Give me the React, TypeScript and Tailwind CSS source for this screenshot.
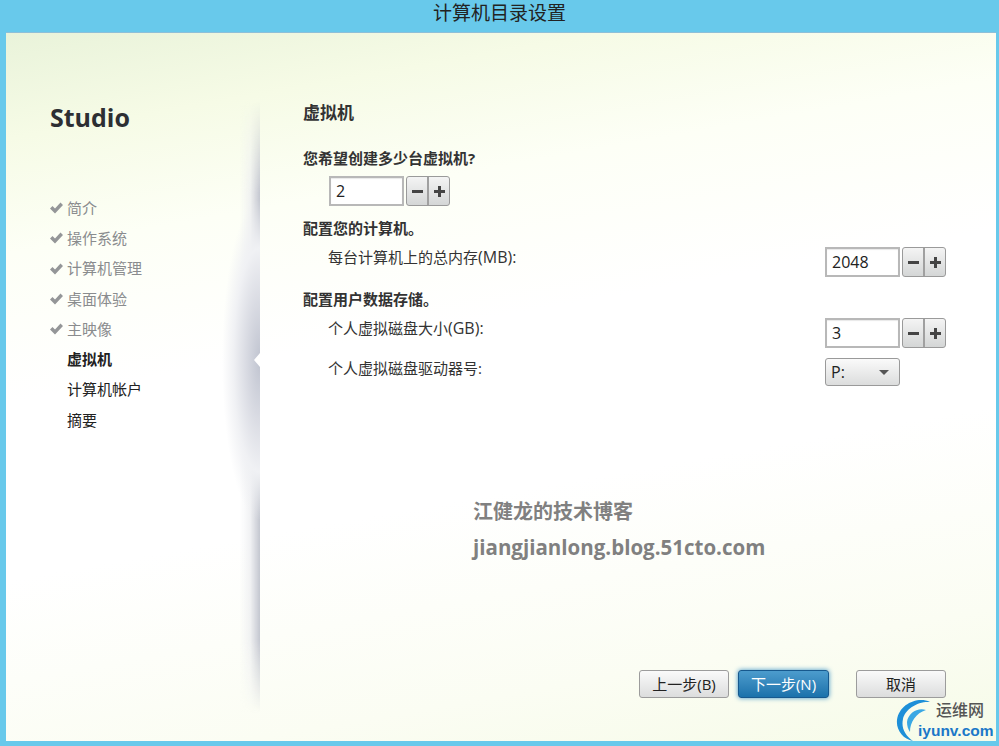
import React from 'react';

const font = { cjk: 'font-["Open_Sans","Noto_Sans_CJK_SC",sans-serif]' };

const navItems = [
  { label: '简介', done: true },
  { label: '操作系统', done: true },
  { label: '计算机管理', done: true },
  { label: '桌面体验', done: true },
  { label: '主映像', done: true },
  { label: '虚拟机', current: true },
  { label: '计算机帐户' },
  { label: '摘要' },
];

const Check = () => (
  <svg width="13" height="12" viewBox="0 0 13 12" className="shrink-0">
    <path d="M0 6.5 L2.5 4 L5 6.5 L10.5 0.5 L13 3 L5 11.5 Z" fill="#949698" />
  </svg>
);

const Stepper = ({ value }: { value: string }) => (
  <div className="flex items-center gap-[2px]">
    <div className="w-[75px] h-[30px] border-2 border-[#b8b8b8] bg-white pl-[5px] text-[16px] leading-[26px] text-[#222] shadow-[inset_0_1px_1px_#e8e8e8]">
      {value}
    </div>
    <div className="w-[44px] h-[30px] flex rounded-[3px] border border-[#9a9a9a] bg-gradient-to-b from-[#f4f4f4] to-[#d4d6d6]">
      <div className="flex-1 flex items-center justify-center border-r-2 border-[#a0a0a0]">
        <div className="w-[11px] h-[3px] bg-[#444]" />
      </div>
      <div className="flex-1 flex items-center justify-center">
        <svg width="11" height="11" viewBox="0 0 11 11">
          <path d="M4 0 H7 V4 H11 V7 H7 V11 H4 V7 H0 V4 H4 Z" fill="#444" />
        </svg>
      </div>
    </div>
  </div>
);

const Button = ({ children, primary, className }: { children: React.ReactNode; primary?: boolean; className?: string }) => (
  <div
    className={
      'h-[28px] flex items-center justify-center rounded-[3px] text-[15px] ' +
      (primary
        ? 'text-white border border-[#17598e] bg-gradient-to-b from-[#4c9ccd] to-[#1a72ab] shadow-[0_0_5px_#3f93c6] '
        : 'text-[#222] border border-[#9c9c9c] bg-gradient-to-b from-[#fafafa] to-[#dcdddd] ') +
      (className ?? '')
    }
  >
    {children}
  </div>
);

export default function App() {
  return (
    <div className={`w-[999px] h-[746px] flex flex-col bg-[#68c9eb] overflow-hidden relative ${font.cjk}`}>
      {/* Title bar */}
      <div className="h-[32px] shrink-0 flex items-center justify-center text-[19px] text-[#222] leading-none pb-[6px]">
        计算机目录设置
      </div>

      {/* Window body */}
      <div className="flex-1 ml-[6px] mr-[3px] mb-[5px] flex border-t border-[#8ebfd8] bg-[linear-gradient(170deg,#e9f3da_0%,#f6fbe6_12%,#fdfff6_25%,#ffffff_42%,#ffffff_62%,#fbfdf3_85%,#f6fbe8_100%)]">
        {/* Sidebar */}
        <aside className="w-[254px] shrink-0 relative pl-[44px] pt-[66px]">
          {/* Edge shadow: long strip plus the bulge behind the pointer */}
          <div className="absolute right-0 top-[68px] bottom-[28px] w-[20px] bg-gradient-to-r from-transparent via-[#ecedf0]/70 to-[#c4c7d0] [mask-image:linear-gradient(to_bottom,transparent,black_15%,black_88%,transparent)]" />
          <div className="absolute right-0 top-[167px] h-[320px] w-[38px] bg-[radial-gradient(ellipse_38px_160px_at_100%_50%,#c0c4d0_0%,#d8dae2_35%,#f0f1f4_70%,transparent_100%)]" />
          <div className="absolute right-0 top-[320px] w-0 h-0 border-y-[7px] border-y-transparent border-r-[6px] border-r-white" />
          <h1 className="text-[25px] leading-[36px] font-bold text-[#2d2f33] relative">Studio</h1>
          <nav className="mt-[58px] flex flex-col relative">
            {navItems.map((item) => (
              <div key={item.label} className="h-[30.25px] flex items-center">
                <div className="w-[17px] flex">{item.done && <Check />}</div>
                <span className={'text-[15px] ' + (item.current ? 'font-bold text-[#222]' : item.done ? 'text-[#8a8c8e]' : 'text-[#222]')}>
                  {item.label}
                </span>
              </div>
            ))}
          </nav>
        </aside>

        {/* Main panel */}
        <main className="flex-1 flex flex-col pl-[43px] pr-[50px] pt-[67px] pb-[43px] text-[15px] text-[#333]">
          <h2 className="text-[17px] leading-[26px] font-bold text-[#333]">虚拟机</h2>
          <p className="mt-[20px] leading-[24px] font-bold">您希望创建多少台虚拟机?</p>
          <div className="ml-[26px] mt-[6px]">
            <Stepper value="2" />
          </div>
          <p className="mt-[10px] leading-[24px] font-bold">配置您的计算机。</p>
          <div className="mt-[7px] pl-[25px] flex justify-between">
            <span className="leading-[20px]">每台计算机上的总内存<span className="text-[16px]">(MB):</span></span>
            <Stepper value="2048" />
          </div>
          <p className="mt-[10px] leading-[24px] font-bold">配置用户数据存储。</p>
          <div className="mt-[7px] pl-[25px] flex justify-between">
            <span className="leading-[20px]">个人虚拟磁盘大小<span className="text-[16px]">(GB):</span></span>
            <Stepper value="3" />
          </div>
          <div className="mt-[10px] pl-[25px] flex justify-between">
            <span className="leading-[20px]">个人虚拟磁盘驱动器号:</span>
            <div className="w-[75px] h-[28px] mr-[46px] flex items-center justify-between pl-[5px] pr-[10px] rounded-[3px] border border-[#9a9a9a] bg-gradient-to-b from-[#fafafa] to-[#dcdddd] text-[#222] text-[16px]">
              <span>P:</span>
              <div className="w-0 h-0 border-x-[5px] border-x-transparent border-t-[5px] border-t-[#555]" />
            </div>
          </div>

          {/* Footer buttons */}
          <div className="mt-auto flex">
            <Button className="w-[90px] ml-[336px]">上一步(B)</Button>
            <Button primary className="w-[91px] ml-[9px]">下一步(N)</Button>
            <Button className="w-[90px] ml-[27px]">取消</Button>
          </div>
        </main>
      </div>

      {/* Watermark */}
      <div className="absolute left-[473px] top-[498px] font-bold text-[#808080]">
        <div className="text-[20px] leading-[28px]">江健龙的技术博客</div>
        <div className="text-[20.5px] leading-[28px] mt-[7px] font-['Open_Sans',sans-serif]">jiangjianlong.blog.51cto.com</div>
      </div>

      {/* Site logo */}
      <div className="absolute left-[896px] top-[698px] w-[100px] h-[46px]">
        <svg width="46" height="44" viewBox="0 0 46 44" className="absolute left-0 top-0">
          <path d="M34 4 C22 -2 3 6 1 22 C0 32 7 41 17 43 C9 37 5 30 7 21 C9 11 22 3 34 4 Z" fill="#1d8fd8" />
          <path d="M30 12 C22 9 12 15 11 24 C11 28 12 31 14 34 C14 24 20 15 30 12 Z" fill="#39a8e4" />
        </svg>
        <div className="absolute left-[40px] top-[3px] text-[16px] leading-[18px] font-medium text-[#555] whitespace-nowrap">运维网</div>
        <div className="absolute left-[22px] top-[24px] text-[15.5px] leading-[18px] font-bold text-[#1b78c8] whitespace-nowrap font-['Liberation_Sans',sans-serif]">iyunv.com</div>
      </div>
    </div>
  );
}
